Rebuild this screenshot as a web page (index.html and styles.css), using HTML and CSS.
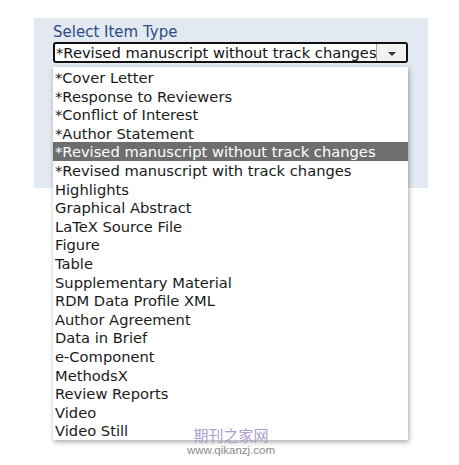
FILE: index.html
```html
<!DOCTYPE html>
<html>
<head>
	<title>Select Item Type</title>
	<link rel="stylesheet" href="styles.css">
</head>
<body>
	<div class="panel">
		<label class="title" for="item-type">Select Item Type</label>
		<div class="select" id="item-type">
			<span class="current">*Revised manuscript without track changes</span>
			<span class="arrow"><span class="tri"></span></span>
		</div>
	</div>
	<ul class="list">
		<li>*Cover Letter</li>
		<li>*Response to Reviewers</li>
		<li>*Conflict of Interest</li>
		<li>*Author Statement</li>
		<li class="on">*Revised manuscript without track changes</li>
		<li>*Revised manuscript with track changes</li>
		<li>Highlights</li>
		<li>Graphical Abstract</li>
		<li>LaTeX Source File</li>
		<li>Figure</li>
		<li>Table</li>
		<li>Supplementary Material</li>
		<li>RDM Data Profile XML</li>
		<li>Author Agreement</li>
		<li>Data in Brief</li>
		<li>e-Component</li>
		<li>MethodsX</li>
		<li>Review Reports</li>
		<li>Video</li>
		<li>Video Still</li>
	</ul>
	<div class="mark">
		<div class="cn">期刊之家网</div>
		<div class="url">www.qikanzj.com</div>
	</div>
</body>
</html>
```

FILE: styles.css
```css
html {
	font-family: "DejaVu Sans", Verdana, sans-serif;
}
body {
	margin: 0;
	background: #ffffff;
	position: relative;
	height: 465px;
}
.panel {
	margin: 18px 0 0 34px;
	width: 394px;
	height: 170px;
	background-color: #e2e9f1;
	padding: 6px 0 0 19px;
	box-sizing: border-box;
}
.title {
	display: block;
	font-size: 15px;
	line-height: 17px;
	color: #2f4b86;
}
.select {
	display: flex;
	width: 355px;
	height: 21px;
	box-sizing: border-box;
	border: 2px solid #111;
	border-radius: 3px;
	background: #fff;
	margin-top: 1px;
}
.current {
	flex: 1;
	font-size: 14.7px;
	line-height: 17px;
	padding-left: 1px;
	color: #111;
	white-space: nowrap;
	overflow: hidden;
}
.arrow {
	width: 29px;
	border-left: 1px solid #a8a8a8;
	background: #f2f2f2;
	display: flex;
	align-items: center;
	justify-content: center;
}
.tri {
	width: 0;
	height: 0;
	border-left: 4px solid transparent;
	border-right: 4px solid transparent;
	border-top: 4px solid #333;
	margin-top: 2px;
}
.list {
	position: absolute;
	left: 53px;
	top: 67px;
	width: 355px;
	margin: 0;
	padding: 1px 0 0 0;
	list-style: none;
	background: #fff;
	box-shadow: 1px 2px 5px rgba(0, 0, 0, 0.35);
	font-size: 14.7px;
	color: #1a1a1a;
}
.list li {
	height: 18.6px;
	line-height: 19.6px;
	padding-left: 2px;
	white-space: nowrap;
}
.list li.on {
	background: #6e6e6e;
	color: #fff;
}
.mark {
	position: absolute;
	left: 181px;
	top: 426px;
	width: 100px;
	text-align: center;
}
.cn {
	font-family: "Noto Sans CJK SC", sans-serif;
	font-size: 15px;
	line-height: 18px;
	color: #a08fc6;
	opacity: 0.85;
}
.url {
	font-family: "Liberation Sans", Arial, sans-serif;
	font-size: 11.5px;
	line-height: 12px;
	color: #8a8a8a;
}
```
